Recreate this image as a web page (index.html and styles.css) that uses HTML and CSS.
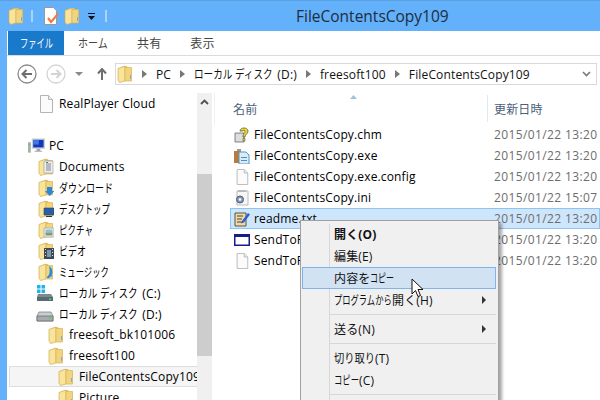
FILE: index.html
```html
<!DOCTYPE html>
<html lang="ja">
<head>
<meta charset="utf-8">
<title>FileContentsCopy109</title>
<link rel="stylesheet" href="styles.css">
</head>
<body>
<svg class="defs" width="0" height="0">
  <symbol id="folder" viewBox="0 0 16 18">
    <path d="M1 3.500 7 1h3l1 2h3.500v13H2.500L1 14.500z" fill="#e8c568"/>
    <path d="M1 3.500 8 1v15l-5.500 1.500L1 15z" fill="#f8e49a" stroke="#d2ae55" stroke-width=".7"/>
    <path d="M8 2.500h6.500V16H8z" fill="#f3d47c" stroke="#d8b45c" stroke-width=".7"/>
    <path d="M13 10h1v4h-1z" fill="#6fb3d8"/>
  </symbol>
  <symbol id="doc" viewBox="0 0 16 18">
    <path d="M2.500 .5h8l4 4v13h-12z" fill="#fbfbfb" stroke="#b4b4b4"/>
    <path d="M10.500 .5v4h4" fill="#eee" stroke="#b4b4b4"/>
  </symbol>
</svg>
<div class="window">
  <header class="titlebar">
    <svg class="ic16 q1"><use href="#folder"/></svg>
    <span class="qsep"></span>
    <svg class="ic16 q2" viewBox="0 0 16 18"><path d="M1.500 .5h9l3 3v14h-12z" fill="#fff" stroke="#999"/><path d="m5 11 3 4 7-8" fill="none" stroke="#ee7a45" stroke-width="2.200"/></svg>
    <svg class="ic16 q3"><use href="#folder"/></svg>
    <svg class="qdrop" viewBox="0 0 7 7"><path d="M0 0h7v1H0zM0 3h7L3.500 7z" fill="#111"/></svg>
    <span class="qsep q4"></span>
    <h1 class="wintitle">FileContentsCopy109</h1>
  </header>
  <main class="frame">
    <nav class="tabs">
      <span class="tab tab-file"><span class="ja w33">ファイル</span></span>
      <span class="tab t1"><span class="ja w30">ホーム</span></span>
      <span class="tab t2">共有</span>
      <span class="tab t3">表示</span>
    </nav>
    <div class="navbar">
      <svg class="navbtn" viewBox="0 0 20 20"><circle cx="10" cy="10" r="9" fill="#fff" stroke="#8a8a8a" stroke-width="1.300"/><path d="M15 10H6M9.500 6 5.500 10l4 4" fill="none" stroke="#6e6e6e" stroke-width="2"/></svg>
      <svg class="navbtn fwd" viewBox="0 0 20 20"><circle cx="10" cy="10" r="9" fill="#fff" stroke="#d4d4d4" stroke-width="1.300"/><path d="M5 10h9M10.500 6l4 4-4 4" fill="none" stroke="#d4d4d4" stroke-width="2"/></svg>
      <svg class="caret" viewBox="0 0 8 4"><path d="M0 0h8L4 4z" fill="#8a8a8a"/></svg>
      <svg class="uparrow" viewBox="0 0 10 12"><path d="M5 12V2M1 5.500 5 1l4 4.500" fill="none" stroke="#6f6f6f" stroke-width="2"/></svg>
      <div class="address">
        <svg class="ic16"><use href="#folder"/></svg>
        <span class="tri"></span><span>PC</span>
        <span class="tri"></span><span class="crumb"><span class="ja w80">ローカル ディスク</span> (D:)</span>
        <span class="tri"></span><span>freesoft100</span>
        <span class="tri"></span><span>FileContentsCopy109</span>
        <svg class="chev" viewBox="0 0 9 6"><path d="m1 1 3.500 3.500L8 1" fill="none" stroke="#777" stroke-width="1.600"/></svg>
      </div>
    </div>
    <div class="content">
      <aside class="tree">
        <div class="tree-rows">
          <div class="row l1"><svg class="ic16"><use href="#doc"/></svg>RealPlayer Cloud</div>
          <div class="row l0 gap"><svg class="ic-pc" viewBox="0 0 18 16"><path d="M0 4h3v11H0z" fill="#a8b0a8"/><path d="M1 6h1v1H1z" fill="#4c4"/><path d="M4 0h14v11H4z" fill="#c8d0d8"/><path d="M5.500 1.500h11v8h-11z" fill="#1537b8"/><path d="M5.500 1.500h6v5h-6z" fill="#3f78e0"/><path d="M9 11h4v2h2v1H7v-1h2z" fill="#a9a9a9"/></svg>PC</div>
          <div class="row l1"><svg class="ic16" viewBox="0 0 16 18"><use href="#folder"/><path d="M6 3h9v12H6z" fill="#eee" stroke="#999" stroke-width=".6"/><path d="M8 6h5M8 8h5M8 10h5M8 12h5" stroke="#778" stroke-width=".9"/><path d="M8 4h2v1H8z" fill="#38c"/></svg>Documents</div>
          <div class="row l1"><svg class="ic16" viewBox="0 0 16 18"><use href="#folder"/><path d="M9 8h5v4h2.500l-4.800 5-4.700-5H9z" fill="#2f86d4"/></svg><span class="ja w54">ダウンロード</span></div>
          <div class="row l1"><svg class="ic16" viewBox="0 0 16 18"><use href="#folder"/><path d="M6 8h10v7H6z" fill="#2a5fa8" stroke="#345" stroke-width=".6"/><path d="M8 16h6v1H8z" fill="#333"/></svg><span class="ja w51">デスクトップ</span></div>
          <div class="row l1"><svg class="ic16" viewBox="0 0 16 18"><use href="#folder"/><path d="M6 7h10v9H6z" fill="#eee" stroke="#999" stroke-width=".6"/><path d="M7.500 8.500h7v3h-7z" fill="#8cc0dc"/><path d="M7.500 11.500h7v3h-7z" fill="#7f9a6e"/></svg><span class="ja w34">ピクチャ</span></div>
          <div class="row l1"><svg class="ic16" viewBox="0 0 16 18"><use href="#folder"/><path d="M6 6h10v11H6z" fill="#3d4a55"/><path d="M7 7h1v1H7zM7 10h1v1H7zM7 13h1v1H7zM14 7h1v1h-1zM14 10h1v1h-1zM14 13h1v1h-1z" fill="#ddd"/><path d="M9 8h4v7H9z" fill="#7d98a8"/></svg><span class="ja w27">ビデオ</span></div>
          <div class="row l1"><svg class="ic16" viewBox="0 0 16 18"><use href="#folder"/><path d="M11 3c4 2 5 9 0 12-2 1-3-1-1-2 2-2 2-6 1-10z" fill="#2f8bd6"/></svg><span class="ja w50">ミュージック</span></div>
          <div class="row l1"><svg class="ic-drive" viewBox="0 0 18 18"><path d="M1 1h3.500v3.500H1zM5.500 1H9v3.500H5.500zM1 5.500h3.500V9H1zM5.500 5.500H9V9H5.500z" fill="#1fb4ee"/><path d="M2 10h13l2 3v4H1v-4z" fill="#7b8a90"/><path d="M1 13h16v4H1z" fill="#566a72"/><path d="M13 14.500h2v1.500h-2z" fill="#5d5"/></svg><span class="crumb"><span class="ja w80">ローカル ディスク</span> (C:)</span></div>
          <div class="row l1"><svg class="ic-drive" viewBox="0 0 18 18"><path d="M3 7h12l2 4v5H1v-5z" fill="#c9ced1" stroke="#777" stroke-width=".7"/><path d="M1 11h16v5H1z" fill="#a5abae" stroke="#666" stroke-width=".7"/><path d="M13 12.500h2V14h-2z" fill="#5c5"/></svg><span class="crumb"><span class="ja w80">ローカル ディスク</span> (D:)</span></div>
          <div class="row l2"><svg class="ic16"><use href="#folder"/></svg>freesoft_bk101006</div>
          <div class="row l2"><svg class="ic16"><use href="#folder"/></svg>freesoft100</div>
          <div class="row l3 current"><svg class="ic16"><use href="#folder"/></svg>FileContentsCopy109</div>
          <div class="row l3"><svg class="ic16"><use href="#folder"/></svg>Picture</div>
        </div>
        <div class="scrollbar">
          <svg class="scroll-up" viewBox="0 0 9 6"><path d="m1 5 3.500-3.500L8 5" fill="none" stroke="#505050" stroke-width="1.800"/></svg>
          <div class="thumb"></div>
        </div>
      </aside>
      <section class="files">
        <div class="columns">
          <span class="col-name">名前</span>
          <svg class="sort" viewBox="0 0 7 4"><path d="M0 4 3.500 0 7 4z" fill="#9cc4de"/></svg>
          <span class="col-date">更新日時</span>
        </div>
        <div class="file"><span class="fname"><svg class="ic16 fi" viewBox="0 0 16 16"><path d="M1 6h9v9H1z" fill="#ddd" stroke="#667" stroke-width=".8"/><path d="M6 4c0-4 8-4 8 0 0 3-3 3-3 6H9c0-4 2-3.500 2-6 0-1-2-1-2 0z" fill="#f0df20" stroke="#554" stroke-width=".8"/><path d="M9 11.500h2V14H9z" fill="#f0df20" stroke="#554" stroke-width=".6"/></svg>FileContentsCopy.chm</span><span class="fdate">2015/01/22 13:20</span></div>
        <div class="file"><span class="fname"><svg class="ic16 fi" viewBox="0 0 16 16"><path d="M0 3h7v12H0z" fill="#b97a3c"/><path d="M3 1h4v2H3z" fill="#999"/><path d="M5 4h7l3 3v9H5z" fill="#d8ecf8" stroke="#5a93c0"/><path d="M7 9h6v1H7zM7 12h6v1H7z" fill="#4a90c8"/></svg>FileContentsCopy.exe</span><span class="fdate">2015/01/22 13:20</span></div>
        <div class="file"><span class="fname"><svg class="ic16 fi"><use href="#doc"/></svg>FileContentsCopy.exe.config</span><span class="fdate">2015/01/22 13:20</span></div>
        <div class="file"><span class="fname"><svg class="ic16 fi" viewBox="0 0 16 16"><path d="M3 1h11v14H3z" fill="#f7f7f7" stroke="#bbb"/><path d="M5 0v2M7 0v2M9 0v2M11 0v2" stroke="#999"/><circle cx="6" cy="9.500" r="3.500" fill="#7f9ab8" stroke="#557"/><circle cx="6" cy="9.500" r="1.300" fill="#fff"/></svg>FileContentsCopy.ini</span><span class="fdate">2015/01/22 15:07</span></div>
        <div class="file selected"><span class="fname"><svg class="ic16 fi" viewBox="0 0 16 16"><path d="M1 2h11v13H1z" fill="#f4d9a0" stroke="#444" stroke-width=".9"/><path d="M3 5h6M3 8h5M3 11h6" stroke="#444"/><path d="m8 10 6-8 2 1.500-6 8-3 1z" fill="#2f5fd0"/></svg>readme.txt</span><span class="fdate">2015/01/22 13:20</span></div>
        <div class="file"><span class="fname"><svg class="ic16 fi" viewBox="0 0 16 16"><path d="M.75 2.750h14.500v10.500H.75z" fill="#fff" stroke="#1a1a8c" stroke-width="1.500"/><path d="M1 2.500h14V5H1z" fill="#1a1a8c"/></svg>SendToFileContents</span><span class="fdate">2015/01/22 13:20</span></div>
        <div class="file"><span class="fname"><svg class="ic16 fi"><use href="#doc"/></svg>SendToFileContents</span><span class="fdate">2015/01/22 13:20</span></div>
      </section>
    </div>
    <div class="menu">
      <div class="mi strong">開く(O)</div>
      <div class="mi">編集(E)</div>
      <div class="mi hot">内容を<span class="ja w24">コピー</span></div>
      <div class="mi sub"><span class="ja w58">プログラムから</span>開く(H)</div>
      <div class="msep"></div>
      <div class="mi sub">送る(N)</div>
      <div class="msep"></div>
      <div class="mi"><span class="ja w41">切り取り</span>(T)</div>
      <div class="mi"><span class="ja w25">コピー</span>(C)</div>
      <div class="msep"></div>
    </div>
    <svg class="cursor" viewBox="0 0 13 20"><path d="M1 1v15l3.500-3.500 2.500 6 2.500-1-2.500-6H12z" fill="#fff" stroke="#111"/></svg>
  </main>
</div>
</body>
</html>
```
FILE: styles.css
```css
* { box-sizing: border-box; }
html, body { margin: 0; height: 400px; overflow: hidden; background: #fff; }
body {
  font-family: "Open Sans", "Noto Sans CJK JP", sans-serif;
  font-size: 12px;
  letter-spacing: .15px;
  color: #000;
}
.defs { position: absolute; }
/* Meiryo UI kana are narrow: condense the glyph run to its measured width */
.ja {
  display: inline-block;
  white-space: nowrap;
  letter-spacing: 0;
  transform-origin: 0 50%;
}
.w24 { width: 24px; transform: scaleX(.667); }
.w25 { width: 25px; transform: scaleX(.694); }
.w27 { width: 27px; transform: scaleX(.75); }
.w30 { width: 30px; transform: scaleX(.833); }
.w33 { width: 33px; transform: scaleX(.6875); }
.w34 { width: 34px; transform: scaleX(.708); }
.w41 { width: 41px; transform: scaleX(.854); }
.w50 { width: 50px; transform: scaleX(.694); }
.w51 { width: 51px; transform: scaleX(.708); }
.w54 { width: 54px; transform: scaleX(.75); }
.w58 { width: 58px; transform: scaleX(.69); }
.w80 { width: 80px; transform: scaleX(.8); }
.crumb { white-space: nowrap; }
.window {
  width: 600px; height: 400px; overflow: hidden;
  display: flex; flex-direction: column;
  background: #63b0fb;
}
.titlebar {
  height: 31px; flex: none;
  display: flex; align-items: center;
  border-top: 1px solid #5a9fe0;
  padding-left: 8px;
}
.ic16 { width: 16px; height: 18px; flex: none; }
.q1 { margin-right: 7px; }
.qsep { width: 2px; height: 12px; background: #a9d3fb; flex: none; }
.q2 { margin-left: 10px; }
.q3 { margin-left: 5px; }
.qdrop { width: 7px; height: 7px; margin-left: 8px; flex: none; }
.q4 { margin-left: 10px; }
.wintitle {
  margin: 0 0 0 189px;
  font-size: 15.5px; font-weight: 400; color: #1d2d3d;
  letter-spacing: 0;
  white-space: nowrap;
}
.frame {
  position: relative; flex: 1; min-height: 0;
  margin-left: 7px; background: #fff;
  display: flex; flex-direction: column;
}
.tabs {
  height: 25px; flex: none;
  display: flex; align-items: stretch;
  border-bottom: 1px solid #dadbdc;
}
.tab { display: flex; align-items: center; color: #444; }
.tab-file {
  width: 56px; height: 24px; margin-left: 1px;
  justify-content: center;
  background: #1979ca; color: #fff;
}
.t1 { margin-left: 14px; }
.t2 { margin-left: 29px; }
.t3 { margin-left: 29px; }
.navbar {
  height: 37px; flex: none;
  display: flex; align-items: center;
  padding-bottom: 1px;
}
.navbtn { width: 20px; height: 20px; margin-left: 10px; flex: none; }
.navbtn.fwd { margin-left: 9px; }
.caret { width: 8px; height: 4px; margin-left: 9px; flex: none; }
.uparrow { width: 10px; height: 12px; margin-left: 14px; flex: none; }
.address {
  flex: 1; height: 22px;
  margin-left: 8px; margin-right: 3px;
  border: 1px solid #d9d9d9;
  display: flex; align-items: center;
  padding-left: 1px; gap: 9px;
  white-space: nowrap;
  color: #111;
}
.tri {
  width: 0; height: 0; flex: none;
  border-left: 5px solid #777;
  border-top: 4px solid transparent;
  border-bottom: 4px solid transparent;
}
.chev { width: 9px; height: 6px; margin-left: auto; margin-right: 5px; flex: none; }
.content { flex: 1; min-height: 0; display: flex; }
.tree { width: 205px; flex: none; display: flex; overflow: hidden; }
.tree-rows { width: 190px; flex: none; overflow: hidden; }
.row {
  height: 21px; display: flex; align-items: center;
  white-space: nowrap; overflow: hidden;
  gap: 4px;
}
.row.gap { margin-top: 21px; }
.l0 { padding-left: 21px; }
.l1 { padding-left: 31px; }
.l2 { padding-left: 41px; }
.l3 { padding-left: 51px; }
.row .ic16 { margin-right: 1px; }
.ic-pc { width: 17px; height: 16px; flex: none; }
.ic-drive { width: 18px; height: 18px; margin-left: -2px; margin-right: 1px; flex: none; }
.current { background: #f5f5f5; border: 1px solid #dedede; border-right: 0; margin-left: 2px; padding-left: 48px; }
.scrollbar {
  width: 15px; flex: none;
  background: #f0f0f0;
  display: flex; flex-direction: column; align-items: center;
}
.scroll-up { width: 9px; height: 6px; margin-top: 6px; flex: none; }
.thumb { width: 100%; height: 182px; margin-top: 69px; background: #cdcdcd; }
.files { flex: 1; min-width: 0; }
.columns {
  height: 31px; position: relative;
  display: flex; align-items: center;
  border-left: 1px solid #eef0f3;
  margin-left: 2px;
}
.col-name { margin-left: 18px; color: #4c607a; }
.sort { position: absolute; left: 135px; top: 2px; width: 7px; height: 4px; }
.col-date {
  position: absolute; left: 272px; top: 2px; height: 27px;
  display: flex; align-items: center;
  border-left: 1px solid #e5e8ec; padding-left: 6px;
  color: #4c607a; white-space: nowrap;
}
.file {
  height: 21px; display: flex; align-items: center;
  margin-left: 18px;
  border: 1px solid transparent;
  white-space: nowrap;
}
.file.selected { background: #cde6fc; border-color: #8fc4f2; }
.fname { width: 263px; flex: none; display: flex; align-items: center; overflow: hidden; }
.fi { width: 16px; height: 16px; margin-left: 3px; margin-right: 4px; }
.fdate { color: #6d6d6d; letter-spacing: .38px; }
.menu {
  position: absolute; left: 293px; top: 189px;
  width: 199px; height: 190px;
  padding: 2px 2px 2px 1px;
  background: #f0f0f0;
  border: 1px solid #a0a0a0;
  box-shadow: 3px 3px 3px rgba(0,0,0,.35);
}
.menu::before {
  content: ""; position: absolute;
  left: 28px; top: 3px; bottom: 0; width: 1px; background: #d7d7d7;
}
.mi {
  position: relative;
  height: 22px; display: flex; align-items: center;
  padding-left: 31px; color: #111;
  border: 1px solid transparent;
  white-space: nowrap;
}
.mi.strong { font-weight: 700; }
.mi.hot { background: #d1e2f2; border-color: #7eb4ea; }
.mi.sub::after {
  content: ""; position: absolute; right: 9px; top: 6px;
  border-left: 4px solid #333;
  border-top: 4px solid transparent;
  border-bottom: 4px solid transparent;
}
.msep { position: relative; height: 7px; margin-left: 28px; }
.msep::after {
  content: ""; position: absolute; left: 0; right: 0; top: 3px;
  height: 1px; background: #d7d7d7;
}
.cursor { position: absolute; left: 404px; top: 247px; width: 13px; height: 20px; }
```
